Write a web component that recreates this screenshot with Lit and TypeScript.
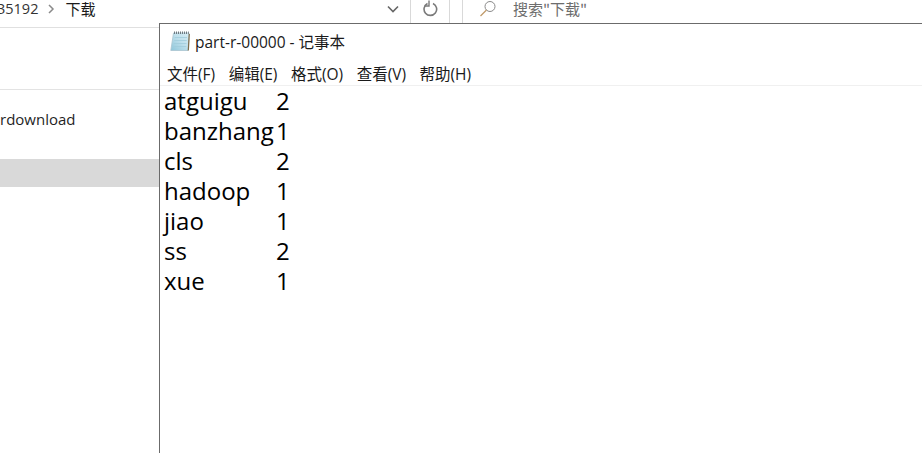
import { LitElement, html, css, svg } from "lit";
import { customElement } from "lit/decorators.js";

const rows: [string, string][] = [
  ["atguigu", "2"], ["banzhang", "1"], ["cls", "2"], ["hadoop", "1"],
  ["jiao", "1"], ["ss", "2"], ["xue", "1"],
];
const menus = ["文件(F)", "编辑(E)", "格式(O)", "查看(V)", "帮助(H)"];

const notepadIcon = svg`<svg class="nicon" width="20" height="21" viewBox="0 0 20 21">
  <defs><linearGradient id="g" x1="0" y1="1" x2="1" y2="0"><stop offset="0" stop-color="#8ec6da"/><stop offset="0.55" stop-color="#bfe0ec"/><stop offset="1" stop-color="#d8edf4"/></linearGradient></defs>
  <path d="M3.5 2H19L18 19.5H0.8Z" fill="url(#g)" stroke="#a9c4cf" stroke-width="0.8"/>
  <path d="M4.6 6.5H17M4.2 9.5H16.7M3.8 12.5H16.5M3.4 15.5H16.2" stroke="#9fcbdb" stroke-width="0.8"/>
  <path d="M4 1.8H18.8" stroke="#6f7a80" stroke-width="2.4" stroke-dasharray="1 1"/>
  <path d="M18.3 19.5L19.3 3" stroke="#7d6c4c" stroke-width="1.2"/>
</svg>`;

@customElement("app-root")
export class AppRoot extends LitElement {
  static styles = css`
    :host { display: block; position: relative; width: 922px; height: 453px; overflow: hidden; background: #fff;
      font-family: "Open Sans", "Noto Sans CJK SC", sans-serif; color: #1a1a1a; }
    .top { height: 27px; display: flex; align-items: flex-start; border-bottom: 1px solid #e0e0e0; line-height: 18px; }
    .top > * { height: 18px; }
    .crumb { display: flex; align-items: center; width: 380px; margin-left: -3px; font-size: 14.5px; }
    .crumb .path { color: #333; white-space: nowrap; }
    .crumb .leaf { font-size: 15px; margin-left: 10px; font-family: "Noto Sans CJK SC", sans-serif; }
    .chev { margin-left: 9px; }
    .drop { width: 31px; display: flex; justify-content: center; align-items: center; margin-right: 2px; }
    .top > .sep { width: 1px; height: 23px; background: #d9d9d9; }
    .refresh { width: 38px; display: flex; justify-content: center; align-items: center; }
    .gap { width: 12px; }
    .search { display: flex; align-items: center; margin-left: 16px; gap: 16px; color: #6d6d6d; font-size: 15px; font-family: "Noto Sans CJK SC", sans-serif; }
    .ribbon { height: 61px; border-bottom: 1px solid #e3e3e3; }
    .nav { display: flex; flex-direction: column; width: 159px; }
    .item { height: 28px; margin-top: 15px; font-size: 15px; line-height: 28px; color: #1f1f1f; white-space: nowrap; }
    .sel { height: 28px; margin-top: 26px; background: #d9d9d9; }
    .win { position: absolute; left: 159px; top: 23px; right: 0; bottom: 0; background: #fff;
      border-left: 1px solid #6b6b6b; border-top: 1px solid #6b6b6b; display: flex; flex-direction: column; }
    .title { height: 36px; display: flex; align-items: center; padding-left: 10px; padding-bottom: 1px; box-sizing: border-box; gap: 5px; font-size: 15.5px; color: #1a1a1a; }
    .menu { height: 26px; padding-top: 1px; box-sizing: border-box; display: flex; align-items: center; padding-left: 7px; gap: 13.5px; font-size: 15.5px; border-bottom: 1px solid #f0f0f0; color: #1a1a1a; white-space: nowrap; }
    .body { font-size: 24px; line-height: 30px; padding-left: 4px; color: #000; display: grid; grid-template-columns: 112px 1fr; }
  `;

  render() {
    return html`
      <div class="top">
        <div class="crumb">
          <span class="path">35192</span>
          <svg class="chev" width="8" height="10" viewBox="0 0 8 10"><path d="M2 1l4 4-4 4" fill="none" stroke="#8a8a8a" stroke-width="1.5"/></svg>
          <span class="leaf">下载</span>
        </div>
        <div class="drop"><svg width="12" height="8" viewBox="0 0 12 8"><path d="M1 1.5l5 5 5-5" fill="none" stroke="#666" stroke-width="1.6"/></svg></div>
        <div class="sep"></div>
        <div class="refresh"><svg width="16" height="18" viewBox="0 0 16 18"><path d="M5.5 3.5A6.3 6.3 0 1 0 11 3.4" fill="none" stroke="#7a7a7a" stroke-width="1.6"/><path d="M7 0.5v5.5H2.5" fill="none" stroke="#7a7a7a" stroke-width="1.4"/></svg></div>
        <div class="sep"></div>
        <div class="gap"></div>
        <div class="sep"></div>
        <div class="search">
          <svg width="18" height="18" viewBox="0 0 18 18"><circle cx="11" cy="6.5" r="5" fill="none" stroke="#8a8a8a" stroke-width="1"/><path d="M7.5 10L1.5 16" stroke="#c09a6a" stroke-width="1.3"/></svg>
          <span>搜索"下载"</span>
        </div>
      </div>
      <div class="ribbon"></div>
      <div class="nav">
        <div class="item">rdownload</div>
        <div class="sel"></div>
      </div>
      <div class="win">
        <div class="title">${notepadIcon}<span>part-r-00000 - 记事本</span></div>
        <div class="menu">${menus.map((m) => html`<span>${m}</span>`)}</div>
        <div class="body">${rows.map(([a, b]) => html`<span>${a}</span><span>${b}</span>`)}</div>
      </div>
    `;
  }
}
